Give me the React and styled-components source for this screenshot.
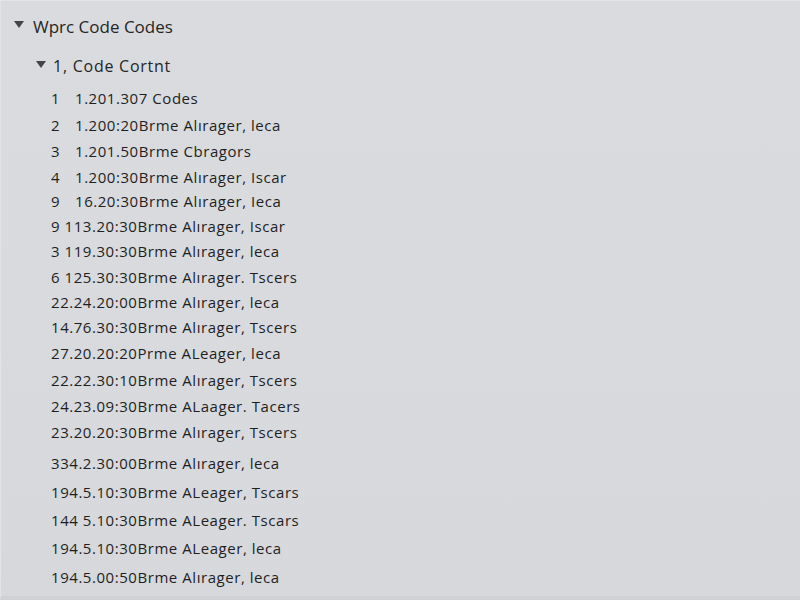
import styled, { createGlobalStyle } from "styled-components";

const GlobalStyle = createGlobalStyle`
  html, body {
    margin: 0;
    padding: 0;
    background: #d9dbde;
  }
  body {
    font-family: "Open Sans", "Liberation Sans", sans-serif;
    color: #222;
  }
`;

// gap = distance from the previous row's centre line
const rows = [
  { num: "1", text: "1.201.307 Codes", gap: 0 },
  { num: "2", text: "1.200:20Brme Alırager, leca", gap: 27 },
  { num: "3", text: "1.201.50Brme Cbragors", gap: 26 },
  { num: "4", text: "1.200:30Brme Alırager, Iscar", gap: 26 },
  { num: "9", text: "16.20:30Brme Alırager, Ieca", gap: 24 },
  { text: "9 113.20:30Brme Alırager, Iscar", gap: 25 },
  { text: "3 119.30:30Brme Alırager, leca", gap: 25 },
  { text: "6 125.30:30Brme Alırager. Tscers", gap: 26 },
  { text: "22.24.20:00Brme Alırager, leca", gap: 25 },
  { text: "14.76.30:30Brme Alırager, Tscers", gap: 25 },
  { text: "27.20.20:20Prme ALeager, leca", gap: 26 },
  { text: "22.22.30:10Brme Alırager, Tscers", gap: 27 },
  { text: "24.23.09:30Brme ALaager. Tacers", gap: 26 },
  { text: "23.20.20:30Brme Alırager, Tscers", gap: 26 },
  { text: "334.2.30:00Brme Alırager, leca", gap: 31 },
  { text: "194.5.10:30Brme ALeager, Tscars", gap: 29 },
  { text: "144 5.10:30Brme ALeager. Tscars", gap: 28 },
  { text: "194.5.10:30Brme ALeager, leca", gap: 28 },
  { text: "194.5.00:50Brme Alırager, leca", gap: 29 },
];

const Page = () => (
  <Frame>
    <Tree>
      <Heading>
        <Caret />
        Wprc Code Codes
      </Heading>
      <SubHeading>
        <Caret />
        1, Code Cortnt
      </SubHeading>
      <List>
        {rows.map((r, i) => (
          <Row key={i} $gap={r.gap}>
            {r.num && <Num>{r.num}</Num>}
            <span>{r.text}</span>
          </Row>
        ))}
      </List>
    </Tree>
  </Frame>
);

export default function App() {
  return (
    <>
      <GlobalStyle />
      <Page />
    </>
  );
}

const Frame = styled.div`
  width: 800px;
  height: 600px;
  box-sizing: border-box;
  border-top: 1px solid #e4e5e7;
  border-left: 1px solid #e2e3e5;
  border-bottom: 4px solid #cfd1d4;
  background: linear-gradient(180deg, #d9dbde 0%, #d8dadd 60%, #d6d8db 100%);
  overflow: hidden;
`;

const Tree = styled.div`
  display: flex;
  flex-direction: column;
  padding: 14px 0 0 13px;
`;

const Caret = styled.span`
  display: inline-block;
  width: 0;
  height: 0;
  border-left: 5.5px solid transparent;
  border-right: 5.5px solid transparent;
  border-top: 7px solid #444;
  margin-right: 9px;
  transform: translateY(-2px);
`;

const Heading = styled.div`
  display: flex;
  align-items: center;
  height: 22px;
  font-size: 17px;
  color: #262626;
`;

const SubHeading = styled.div`
  display: flex;
  align-items: center;
  height: 22px;
  margin-top: 18px;
  padding-left: 22px;
  font-size: 16px;
  letter-spacing: 0.75px;
  color: #262626;

  ${Caret} {
    margin-right: 7px;
  }
`;

const List = styled.div`
  display: flex;
  flex-direction: column;
  padding-left: 37px;
  margin-top: 11px;
`;

const Row = styled.div`
  display: flex;
  align-items: center;
  height: 20px;
  margin-top: ${(p) => (p.$gap ? p.$gap - 20 : 0)}px;
  font-size: 15px;
  letter-spacing: 0.55px;
  color: #1f1f1f;
  white-space: nowrap;
`;

const Num = styled.span`
  width: 24px;
`;
